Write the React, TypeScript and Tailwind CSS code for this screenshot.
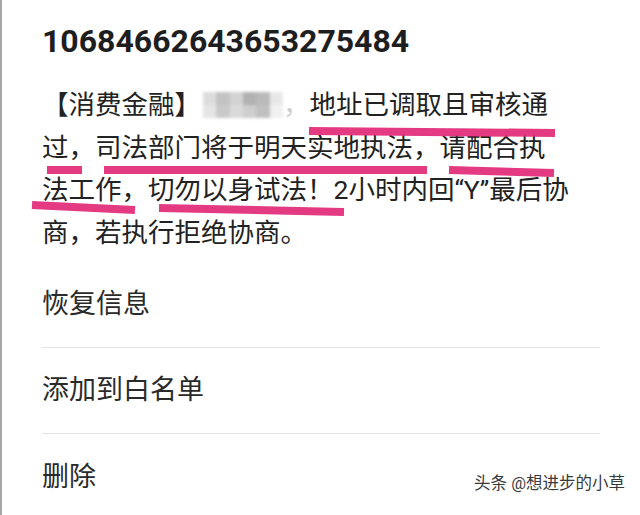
import React from "react"

const menuItems = ["恢复信息", "添加到白名单", "删除"]

// grey cells of the blurred name
const mosaic = [
  ["#d9d9d9", "#bdbdbd", "#cfcfcf", "#a9a9a9", "#b3b3b3", "#e6e6e6"],
  ["#e3e3e3", "#c4c4c4", "#d6d6d6", "#c9c9c9", "#bababa", "#f0f0f0"],
]

function Mosaic() {
  return (
    <span className="inline-flex flex-col w-[80px] h-[26px] ml-[2px] align-middle blur-[1.5px] opacity-90">
      {mosaic.map((row, i) => (
        <span key={i} className="flex flex-1">
          {row.map((c, j) => (
            <span key={j} className="flex-1" style={{ backgroundColor: c }} />
          ))}
        </span>
      ))}
    </span>
  )
}

const lines = [
  "过，司法部门将于明天实地执法，请配合执",
  "法工作，切勿以身试法！2小时内回“Y”最后协",
  "商，若执行拒绝协商。",
]

export default function App() {
  return (
    <div className="relative w-[640px] h-[515px] overflow-hidden bg-white border-l-2 border-[#a8a8a8] font-['Roboto','Noto_Sans_CJK_SC',sans-serif] text-[#1e1e1e]">
      <div className="pl-[40px] pr-[20px] pt-[21px]">
        <div className="text-[32px] font-bold leading-[40px]">10684662643653275484</div>
        <div className="mt-[23px] text-[26.5px] text-[#222] whitespace-nowrap">
          <div className="h-[42.5px] leading-[42.5px] flex items-center">
            <span>【消费金融】</span>
            <Mosaic />
            <span className="text-[#d0d0d0]">，</span>
            <span>地址已调取且审核通</span>
          </div>
          {lines.map((l) => (
            <div key={l} className="h-[42.5px] leading-[42.5px]">
              {l}
            </div>
          ))}
        </div>
      </div>

      <ul className="mt-[8px] ml-[40px] w-[558px]">
        {menuItems.map((item, i) => (
          <li
            key={item}
            className={`h-[86px] flex items-center text-[27px] text-[#2a2a2a] ${
              i < menuItems.length - 1 ? "border-b border-[#e4e4e4]" : ""
            }`}
          >
            {item}
          </li>
        ))}
      </ul>

      <div className="absolute right-[15px] bottom-[21px] text-[16.5px] leading-[20px] text-[#3a3a3a] [text-shadow:0_0_2px_#fff,0_0_2px_#fff]">
        头条 @想进步的小草
      </div>

      {/* hand drawn pink marks over the text */}
      <svg className="absolute inset-0 pointer-events-none" width="640" height="515">
        <g stroke="#e2307c" strokeWidth="8" fill="none" opacity="0.95">
          <path d="M307 131 L553 133" />
          <path d="M45 170 L80 170" />
          <path d="M102 170 L425 170" />
          <path d="M447 170 L552 173" />
          <path d="M30 205 L133 210" />
          <path d="M157 208 L342 212" />
        </g>
      </svg>
    </div>
  )
}
